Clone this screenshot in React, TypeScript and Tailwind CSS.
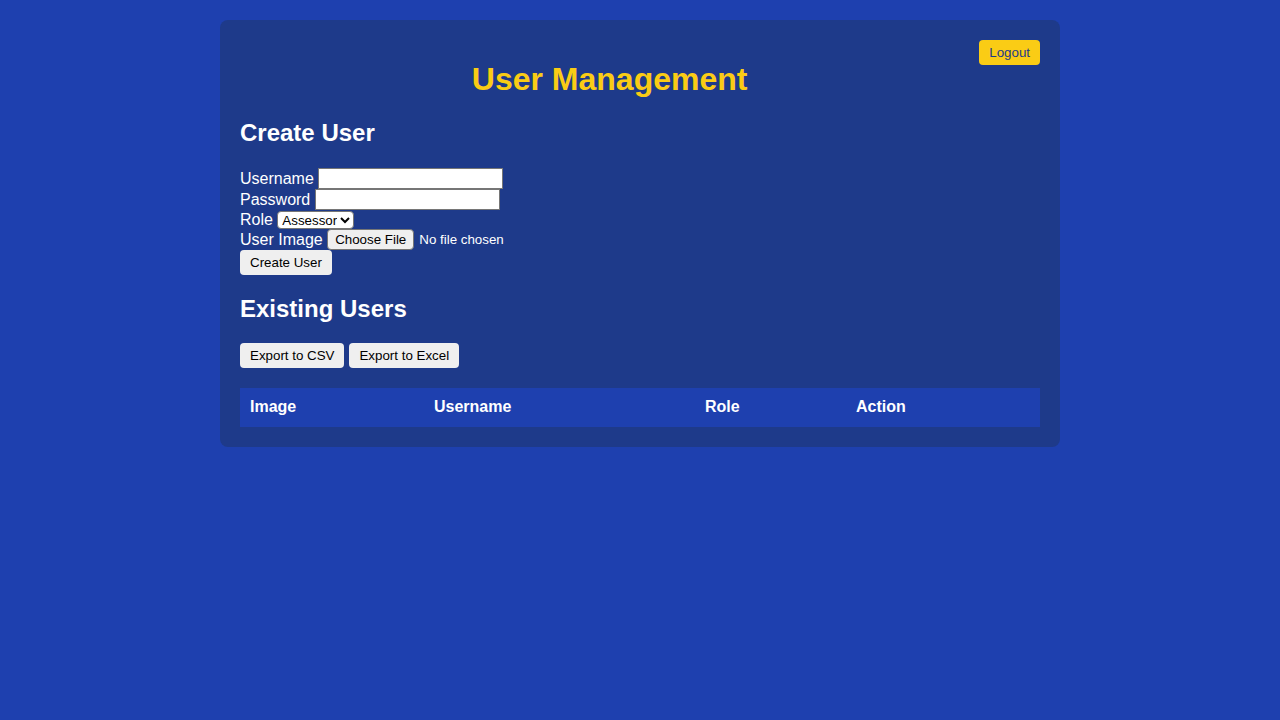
import React from "react";

const btn =
  "h-[25px] px-2.5 rounded bg-[#efefef] text-black text-[13.333px] leading-none hover:bg-gray-200";

export default function App() {
  return (
    <div
      className="min-h-screen bg-[#1e40af] pt-5 text-white"
      style={{ fontFamily: '"Liberation Sans", Arial, sans-serif' }}
    >
      <div className="mx-auto w-[840px] rounded-lg bg-[#1e3a8a] p-5">
        <div className="flex items-start">
          <h1 className="flex-1 text-center text-[32px] font-bold leading-9 text-[#facc15] mt-[21px]">
            User Management
          </h1>
          <button className="h-[25px] px-2.5 rounded bg-[#facc15] text-[#1e3a8a] text-[13.333px] leading-none">
            Logout
          </button>
        </div>

        <h2 className="mt-5 text-2xl font-bold leading-8">Create User</h2>

        <form className="mt-[19px] flex flex-col items-start text-base">
          <label className="flex h-[21px] items-center gap-[4.45px]">
            Username
            <input
              type="text"
              className="h-[21px] w-[185px] border border-[#767676] bg-white text-black text-[13px]"
            />
          </label>
          <label className="flex h-[21px] items-center gap-[4.45px]">
            Password
            <input
              type="password"
              className="h-[21px] w-[185px] border border-[#767676] bg-white text-black text-[13px]"
            />
          </label>
          <label className="flex h-[19px] items-center gap-[4.45px]">
            Role
            <select className="h-[18px] w-[77px] border border-[#767676] rounded-sm bg-white text-black text-[13.333px] leading-none">
              <option>Assessor</option>
              <option>Admin</option>
            </select>
          </label>
          <label className="flex h-[21px] items-center gap-[4.45px]">
            User Image
            <input
              type="file"
              className="text-[13.333px] text-white file:mr-[5px] file:h-[21px] file:px-[7px] file:rounded-sm file:border file:border-[#767676] file:bg-[#efefef] file:text-black"
            />
          </label>
          <button type="button" className={btn}>
            Create User
          </button>
        </form>

        <h2 className="mt-[18px] text-2xl font-bold leading-8">Existing Users</h2>

        <div className="mt-[18px] flex gap-[5px]">
          <button className={btn}>Export to CSV</button>
          <button className={btn}>Export to Excel</button>
        </div>

        <table className="mt-5 w-full border-collapse text-left">
          <thead>
            <tr className="bg-[#1e40af] h-[39px]">
              <th className="w-[184px] px-2.5 pb-px font-bold">Image</th>
              <th className="w-[271px] px-2.5 pb-px font-bold">Username</th>
              <th className="w-[151px] px-2.5 pb-px font-bold">Role</th>
              <th className="px-2.5 pb-px font-bold">Action</th>
            </tr>
          </thead>
          <tbody></tbody>
        </table>
      </div>
    </div>
  );
}
